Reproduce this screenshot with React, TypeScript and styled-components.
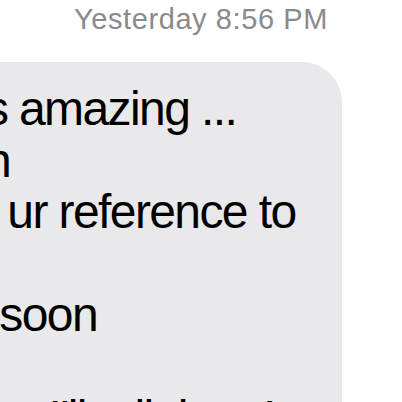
import styled, { createGlobalStyle } from 'styled-components'

const GlobalStyle = createGlobalStyle`
  html, body {
    margin: 0;
    padding: 0;
    background: #ffffff;
    overflow: hidden;
  }
  body {
    font-family: 'Liberation Sans', Arial, sans-serif;
  }
`

const Thread = styled.div`
  width: 402px;
  height: 402px;
  overflow: hidden;
  display: flex;
  flex-direction: column;
  background: #ffffff;
`

const Timestamp = styled.div`
  padding-top: 2px;
  text-align: center;
  font-size: 29px;
  line-height: 35px;
  letter-spacing: 0.6px;
  color: #8a8a8e;
`

const Row = styled.div`
  display: flex;
  margin-top: 25px;
  margin-left: -264px;
`

const Bubble = styled.div`
  width: 606px;
  flex-shrink: 0;
  box-sizing: border-box;
  padding: 21px 20px 40px 20px;
  background: #e9e9eb;
  border-radius: 40px;
  color: #000000;
  font-size: 48px;
  line-height: 51.5px;
  letter-spacing: -1.6px;
`

const Line = styled.div`
  white-space: pre;
  min-height: 51.5px;
`

const lines = [
  'Oh wow. It is amazing ...',
  'of the design',
  'so I can use ur reference to',
  'build mine',
  'and share it soon',
  '',
  "Thanks again, I'll talk later!",
]

export default function App() {
  return (
    <>
      <GlobalStyle />
      <Thread>
        <Timestamp>Yesterday 8:56 PM</Timestamp>
        <Row>
          <Bubble>
            {lines.map((text, i) => (
              <Line key={i}>{text}</Line>
            ))}
          </Bubble>
        </Row>
      </Thread>
    </>
  )
}
